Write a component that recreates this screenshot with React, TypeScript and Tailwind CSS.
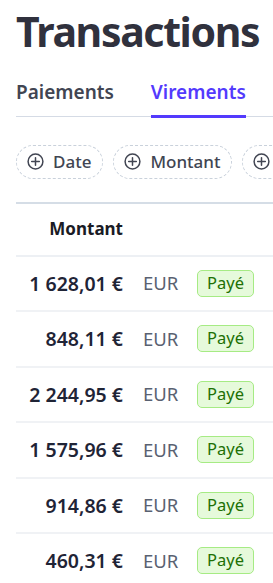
import React from "react";

const rows = [
  "1 628,01 €",
  "848,11 €",
  "2 244,95 €",
  "1 575,96 €",
  "914,86 €",
  "460,31 €",
  "1 102,40 €",
];

const PlusCircle: React.FC = () => (
  <svg width="17" height="17" viewBox="0 0 17 17" fill="none" className="shrink-0">
    <circle cx="8.5" cy="8.5" r="7.4" stroke="#414552" strokeWidth="1.5" />
    <path d="M8.5 4.7v7.6M4.7 8.5h7.6" stroke="#414552" strokeWidth="1.5" strokeLinecap="round" />
  </svg>
);

const FilterChip: React.FC<{ label: string }> = ({ label }) => (
  <div className="flex items-center gap-[9px] h-[34px] pl-[10px] pr-[11px] rounded-full border border-dashed border-[#c9d1db] shrink-0">
    <PlusCircle />
    <span className="text-[17px] font-medium text-[#414552]">{label}</span>
  </div>
);

const App: React.FC = () => {
  return (
    <div
      className="w-[273px] h-[583px] overflow-hidden bg-white"
      style={{ fontFamily: '"Noto Sans", "Open Sans", sans-serif' }}
    >
      <div className="pl-4">
        <h1 className="text-[41px] leading-[60px] font-bold text-[#30313d] tracking-[-1.35px] mt-[1px] whitespace-nowrap">
          Transactions
        </h1>

        <div className="flex gap-[37px] border-b border-[#d5dbe5] mt-[17px] whitespace-nowrap">
          <div className="pb-[9px] text-[19px] font-semibold text-[#414552]">Paiements</div>
          <div className="relative pb-[9px] text-[19px] font-semibold text-[#533afd]">
            Virements
            <div className="absolute left-0 right-0 bottom-[-2px] h-[3px] bg-[#533afd]" />
          </div>
        </div>

        <div className="flex gap-[10px] mt-[28px]">
          <FilterChip label="Date" />
          <FilterChip label="Montant" />
          <FilterChip label="Statut" />
        </div>

        <div className="mt-[23px] border-t-2 border-[#d5dde6]">
          <div className="flex items-center h-[53px] border-b-2 border-[#edf0f4]">
            <div className="w-[107px] text-right text-[17px] font-bold text-[#1a1b25]">Montant</div>
          </div>
          {rows.map((amount) => (
            <div key={amount} className="flex items-center h-[55.5px] border-b-2 border-[#f0f2f5]">
              <div className="w-[107px] text-right text-[19.5px] font-semibold text-[#1f2436] whitespace-nowrap">
                {amount}
              </div>
              <div className="ml-[20px] w-[54px] text-[18.5px] text-[#596171]">EUR</div>
              <div className="px-[9px] h-[27px] flex items-center rounded-[5px] border border-[#a6eb84] bg-[#e6fadb] text-[16.5px] text-[#217005]">
                Payé
              </div>
            </div>
          ))}
        </div>
      </div>
    </div>
  );
};

export default App;
